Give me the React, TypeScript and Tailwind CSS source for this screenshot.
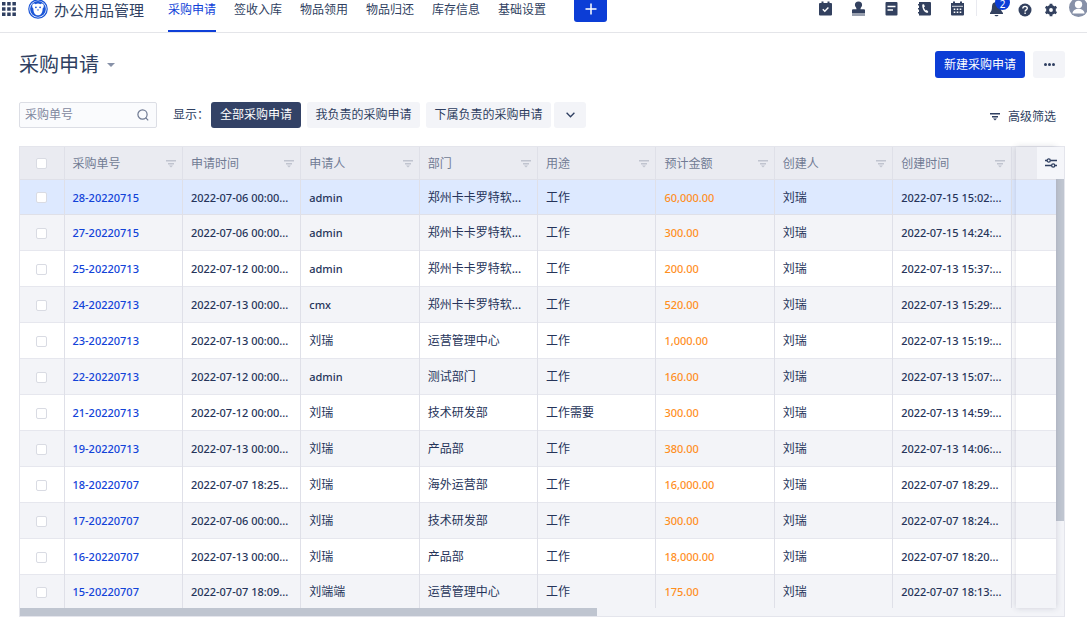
import React from 'react';

const NAV = ['采购申请', '签收入库', '物品领用', '物品归还', '库存信息', '基础设置'];
const HEADERS = ['采购单号', '申请时间', '申请人', '部门', '用途', '预计金额', '创建人', '创建时间'];
const ROWS: string[][] = [
  ['28-20220715', '2022-07-06 00:00...', 'admin', '郑州卡卡罗特软...', '工作', '60,000.00', '刘瑞', '2022-07-15 15:02:...'],
  ['27-20220715', '2022-07-06 00:00...', 'admin', '郑州卡卡罗特软...', '工作', '300.00', '刘瑞', '2022-07-15 14:24:...'],
  ['25-20220713', '2022-07-12 00:00...', 'admin', '郑州卡卡罗特软...', '工作', '200.00', '刘瑞', '2022-07-13 15:37:...'],
  ['24-20220713', '2022-07-13 00:00...', 'cmx', '郑州卡卡罗特软...', '工作', '520.00', '刘瑞', '2022-07-13 15:29:...'],
  ['23-20220713', '2022-07-13 00:00...', '刘瑞', '运营管理中心', '工作', '1,000.00', '刘瑞', '2022-07-13 15:19:...'],
  ['22-20220713', '2022-07-12 00:00...', 'admin', '测试部门', '工作', '160.00', '刘瑞', '2022-07-13 15:07:...'],
  ['21-20220713', '2022-07-12 00:00...', '刘瑞', '技术研发部', '工作需要', '300.00', '刘瑞', '2022-07-13 14:59:...'],
  ['19-20220713', '2022-07-13 00:00...', '刘瑞', '产品部', '工作', '380.00', '刘瑞', '2022-07-13 14:06:...'],
  ['18-20220707', '2022-07-07 18:25...', '刘瑞', '海外运营部', '工作', '16,000.00', '刘瑞', '2022-07-07 18:29...'],
  ['17-20220707', '2022-07-06 00:00...', '刘瑞', '技术研发部', '工作', '300.00', '刘瑞', '2022-07-07 18:24...'],
  ['16-20220707', '2022-07-13 00:00...', '刘瑞', '产品部', '工作', '18,000.00', '刘瑞', '2022-07-07 18:20...'],
  ['15-20220707', '2022-07-07 18:09...', '刘端端', '运营管理中心', '工作', '175.00', '刘瑞', '2022-07-07 18:13:...'],
];

function FilterIcon({ className }: { className: string }) {
  return (
    <svg viewBox="0 0 10 8" className={className} fill="currentColor" aria-hidden="true">
      <path d="M0 0h10v1.4H0zM2 3h6v1.4H2zM3 5.4h4L5 7.6z" />
    </svg>
  );
}

function Logo() {
  return (
    <svg viewBox="0 0 20 20" className="h-5 w-5" aria-hidden="true">
      <circle cx="10" cy="9" r="9.2" fill="#fff" stroke="#1b56d8" strokeWidth="1.2" />
      <circle cx="10" cy="9" r="7.9" fill="#1b56d8" />
      <path d="M4.200 6.200C4 3.600 6.400 3 7.600 4.200 9 3.400 11 3.400 12.400 4.200 13.600 3 16 3.600 15.800 6.200c-.1 1.300-.7 1.900-1.200 2.200.2 3.600-1.500 6.900-4.600 6.900s-4.800-3.300-4.600-6.900c-.5-.3-1.100-.9-1.200-2.200z" fill="#fff" />
      <circle cx="7.900" cy="7.300" r="0.900" fill="#1b56d8" />
      <circle cx="12.100" cy="7.300" r="0.900" fill="#1b56d8" />
      <path d="M9 9.500h2l-1 1.500z" fill="#1b56d8" />
    </svg>
  );
}

const TOOLS: { label: string; art: React.ReactNode }[] = [
  {
    label: '任务',
    art: (
      <>
        <path fill="currentColor" d="M2 2h1.500V.5h2V2h4V.5h2V2H13a1 1 0 0 1 1 1v10.500a1 1 0 0 1-1 1H2a1 1 0 0 1-1-1V3a1 1 0 0 1 1-1z" />
        <path d="M4.800 8.200l2 2 3.600-3.800" fill="none" stroke="#fff" strokeWidth="1.400" />
      </>
    ),
  },
  {
    label: '审批',
    art: (
      <>
        <path fill="currentColor" d="M7.500.5a3.600 3.600 0 0 1 3.600 3.600c0 1.700-1.600 2.500-1.600 4.200h3.500a1 1 0 0 1 1 1V12.500H1V9.300a1 1 0 0 1 1-1h3.500c0-1.700-1.600-2.500-1.600-4.200A3.600 3.600 0 0 1 7.500.5z" />
        <path fill="currentColor" opacity=".5" d="M1 13h13v2H1z" />
      </>
    ),
  },
  {
    label: '日志',
    art: (
      <>
        <rect x="1.500" y="1" width="12" height="13.500" rx="1" fill="currentColor" />
        <path d="M3.500 5.500h8M3.500 9h5.500" stroke="#fff" strokeWidth="1.500" fill="none" />
      </>
    ),
  },
  {
    label: '通讯录',
    art: (
      <>
        <path fill="currentColor" d="M2 1h11a1 1 0 0 1 1 1v11.500a1 1 0 0 1-1 1H2v-2H1v-1.500h1V8.500H1V7h1V4.500H1V3h1z" />
        <path fill="#fff" d="M5.300 3.600l1.700-.4.900 2.400-1 .9c.3 1.200.9 2.100 1.800 2.900l1.200-.5 1.500 2-1.200 1.200c-3.100-.6-5.400-4.900-4.900-8.500z" />
      </>
    ),
  },
  {
    label: '日程',
    art: (
      <>
        <path fill="currentColor" d="M1 2h2V.5h2V2h5V.5h2V2h2v11.500a1 1 0 0 1-1 1H2a1 1 0 0 1-1-1z" />
        <path stroke="#fff" strokeWidth="1.400" strokeDasharray="1.600 1.400" fill="none" d="M3.700 8.300h8M3.700 11.300h8" />
        <path stroke="#fff" strokeWidth=".8" d="M2 5.300h11" />
      </>
    ),
  },
];

export default function App() {
  return (
    <div className="min-h-screen bg-white font-['Noto_Sans','Noto_Sans_CJK_SC',sans-serif] text-xs text-[#2f3f61]">
      <header className="flex h-[33px] items-start border-b border-[#e4e5e9] bg-white">
        <button aria-label="应用" className="mt-0.5 ml-0.5 w-3.5">
          <svg viewBox="0 0 14 14" className="h-3.5 w-3.5" fill="currentColor">
            <path d="M0 0h3.500v3.500H0zM5.200 0h3.500v3.500H5.200zM10.400 0h3.500v3.500h-3.500zM0 5.200h3.500v3.500H0zM5.200 5.200h3.500v3.500H5.200zM10.400 5.200h3.500v3.500h-3.500zM0 10.400h3.500v3.500H0zM5.200 10.400h3.500v3.500H5.200zM10.400 10.400h3.500v3.500h-3.500z" />
          </svg>
        </button>
        <a href="#" className="ml-3 flex items-center gap-1.5">
          <Logo />
          <span className="text-[15px] leading-5">办公用品管理</span>
        </a>
        <nav className="ml-6 flex gap-[18px]">
          {NAV.map((n, i) => (
            <a
              key={n}
              href="#"
              className={i === 0 ? 'h-8 border-b-2 border-[#0e3fd8] leading-5 text-[#0e3fd8]' : 'h-8 leading-5'}
            >
              {n}
            </a>
          ))}
        </nav>
        <button aria-label="新建" className="ml-7 flex h-[22px] w-[33px] items-center justify-center rounded-b-[3px] bg-[#0c3dd6] text-white">
          <svg viewBox="0 0 12 12" className="mb-1 h-3 w-3" stroke="currentColor" strokeWidth="1.500">
            <path d="M6 .5v11M.5 6h11" />
          </svg>
        </button>
        <div className="ml-auto flex gap-[18px] text-[#33415f]">
          {TOOLS.map((t) => (
            <button key={t.label} aria-label={t.label} className="mt-px w-[15px]">
              <svg viewBox="0 0 15 15" className="h-[15px] w-[15px]">{t.art}</svg>
            </button>
          ))}
        </div>
        <span className="ml-[11px] h-4 w-px bg-[#e9eaf0]" />
        <div className="ml-3 flex text-[#33415f]">
          <button aria-label="通知" className="relative mt-px w-[15px]">
            <svg viewBox="0 0 15 15" className="h-[15px] w-[15px]" fill="currentColor">
              <path d="M7 0a4.500 4.500 0 0 1 4.500 4.500c0 3.500 1.200 4.800 2.500 6.500v1H1v-1c1.300-1.700 2-3 2-6.500A4.500 4.500 0 0 1 7 0zM5.500 13h4c-.5 1.700-3.500 1.700-4 0z" />
            </svg>
            <span className="absolute -top-1.5 left-[6px] flex h-[15px] w-[15px] items-end justify-center rounded-full bg-[#0c3dd6] text-[10px] leading-[11px] text-white">2</span>
          </button>
          <button aria-label="帮助" className="mt-0.5 ml-3.5">
            <svg viewBox="0 0 14 14" className="h-3.5 w-3.5">
              <circle cx="7" cy="7" r="6.500" fill="currentColor" />
              <path d="M4.800 5.600c0-3 4.500-2.800 4.500-.3 0 1.500-2.200 1.600-2.200 3.200M7.100 9.600v1.500" fill="none" stroke="#fff" strokeWidth="1.400" />
            </svg>
          </button>
          <button aria-label="设置" className="mt-0.5 ml-3">
            <svg viewBox="0 0 14 14" className="h-3.5 w-3.5">
              <circle cx="7" cy="7" r="3.400" fill="none" stroke="currentColor" strokeWidth="3" />
              <path d="M7 .8v2M7 11.200v2M1.600 3.900l1.800 1M10.600 9.100l1.800 1M1.600 10.100l1.800-1M10.600 4.900l1.800-1" stroke="currentColor" strokeWidth="2.800" />
            </svg>
          </button>
          <button aria-label="用户" className="ml-[11px] w-[18px] overflow-hidden">
            <svg viewBox="0 0 18 18" className="h-[18px] w-[18px]">
              <circle cx="9.500" cy="7.500" r="9.500" fill="#8791a8" />
              <circle cx="9.500" cy="4.500" r="3.700" fill="#fff" />
              <path d="M3.500 13.500c0-6.500 12-6.500 12 0z" fill="#fff" />
            </svg>
          </button>
        </div>
      </header>

      <main className="pr-[22px] pl-[19px]">
        <div className="flex items-start justify-between pt-[18px]">
          <h1>
            <button className="flex items-center gap-2 text-xl leading-7">
              采购申请
              <svg viewBox="0 0 8 4" className="h-1 w-2 text-[#8791a8]" fill="currentColor">
                <path d="M0 0h8L4 4z" />
              </svg>
            </button>
          </h1>
          <div className="flex gap-2">
            <button className="h-[27px] rounded-[3px] bg-[#0c3dd6] px-[9px] text-white">新建采购申请</button>
            <button aria-label="更多" className="flex h-[27px] w-8 items-center justify-center rounded-[3px] bg-[#f3f4f8]">
              <svg viewBox="0 0 11 3" className="h-[3px] w-[11px]" fill="currentColor">
                <circle cx="1.500" cy="1.500" r="1.500" />
                <circle cx="5.500" cy="1.500" r="1.500" />
                <circle cx="9.500" cy="1.500" r="1.500" />
              </svg>
            </button>
          </div>
        </div>

        <div className="mt-[23px] flex items-center">
          <div className="flex h-[26px] w-[138px] items-center rounded-[2px] border border-[#dcdee5] bg-[#fafbfd] px-[5px]">
            <input aria-label="采购单号" placeholder="采购单号" className="min-w-0 flex-1 bg-transparent outline-none placeholder:text-[#7f889e]" />
            <svg viewBox="0 0 12 12" className="mr-0.5 h-3 w-3 text-[#6d7891]" fill="none" stroke="currentColor" strokeWidth="1.200">
              <circle cx="5.500" cy="5.500" r="4.600" />
              <path d="M8.600 8.600l2.600 2.800" />
            </svg>
          </div>
          <span className="ml-4 w-[38px] whitespace-nowrap">显示：</span>
          <button className="h-[26px] w-[90px] rounded-[3px] bg-[#334266] text-white">全部采购申请</button>
          <button className="ml-1.5 h-[26px] w-[113px] rounded-[3px] bg-[#f3f4f8]">我负责的采购申请</button>
          <button className="ml-1.5 h-[26px] w-[125px] rounded-[3px] bg-[#f3f4f8]">下属负责的采购申请</button>
          <button aria-label="展开" className="ml-[3px] flex h-[26px] w-8 items-center justify-center rounded-[3px] bg-[#f3f4f8]">
            <svg viewBox="0 0 9 6" className="h-1.5 w-[9px]" fill="none" stroke="currentColor" strokeWidth="1.300">
              <path d="M.6.7l3.900 4L8.400.7" />
            </svg>
          </button>
          <button className="mr-[9px] ml-auto flex items-center gap-2 pt-1">
            <FilterIcon className="h-2 w-2.5" />
            高级筛选
          </button>
        </div>

        <div className="relative mt-[18px] border border-[#e4e5ec] bg-[#f3f4f8]">
          <div className="flex">
            <div className="min-w-0 flex-1">
              <table className="w-full table-fixed border-collapse text-left">
                <colgroup>
                  <col className="w-11" />
                  {HEADERS.map((h) => (
                    <col key={h} />
                  ))}
                  <col className="w-[45px]" />
                </colgroup>
                <thead>
                  <tr className="h-8 border-b border-[#dfe0e8] bg-[#eaebf1] text-[#717b94]">
                    <th className="border-r border-[#dfe0e8] px-0 pt-0.5 pb-0">
                      <input type="checkbox" aria-label="全选" className="mx-auto block h-[11px] w-[11px] appearance-none rounded-[2px] border border-[#d9dbe3] bg-white" />
                    </th>
                    {HEADERS.map((h) => (
                      <th key={h} className="border-r border-[#dfe0e8] pt-0.5 pr-[6px] pb-0 pl-2 font-normal">
                        <div className="flex items-center justify-between">
                          {h}
                          <FilterIcon className="h-2 w-2.5 text-[#c0c4cf]" />
                        </div>
                      </th>
                    ))}
                    <th />
                  </tr>
                </thead>
                <tbody>
                  {ROWS.map((row, r) => (
                    <tr
                      key={row[0]}
                      className={
                        r === 0
                          ? 'h-[35px] border-b border-[#dfe0e8] bg-[#dde9ff]'
                          : r % 2
                            ? 'h-9 border-b border-[#e6e7ee] bg-[#f3f4f8] last:h-[34px] last:border-b-0'
                            : 'h-9 border-b border-[#e6e7ee] bg-white'
                      }
                    >
                      <td className="border-r border-[#dfe0e8] px-0 pt-0.5 pb-0">
                        <input type="checkbox" aria-label={row[0]} className="mx-auto block h-[11px] w-[11px] appearance-none rounded-[2px] border border-[#d9dbe3] bg-white" />
                      </td>
                      {row.map((cell, c) => (
                        <td key={c} className="border-r border-[#dfe0e8] px-2 pt-0.5 pb-0 whitespace-nowrap text-[#26345a]">
                          {c === 0 ? (
                            <a href="#" className="text-[11px] font-medium text-[#1243d8]">{cell}</a>
                          ) : c === 5 ? (
                            <span className="text-[11px] font-medium text-[#ff8f1f]">{cell}</span>
                          ) : /^[\x20-\x7e]+$/.test(cell) ? (
                            <span className="text-[11px] font-medium">{cell}</span>
                          ) : (
                            cell
                          )}
                        </td>
                      ))}
                      <td />
                    </tr>
                  ))}
                </tbody>
              </table>
            </div>
            <div className="w-2 shrink-0 pt-8">
              <div className="h-[342px] bg-[#bfc5d0]" />
            </div>
          </div>
          <div className="h-2">
            <div className="h-2 w-[55.3%] bg-[#bfc5d0]" />
          </div>
          <div className="pointer-events-none absolute top-0 right-2 bottom-2 w-10 shadow-[0_0_6px_rgba(40,50,80,0.18)]" />
          <button aria-label="列设置" className="absolute top-0 right-0 flex h-8 w-[27px] items-center justify-center bg-[#f5f6fa]">
            <svg viewBox="0 0 12 10" className="h-2.5 w-3" fill="none" stroke="currentColor" strokeWidth="1.300">
              <path d="M0 2.500h2M5.500 2.500H12M0 7.500h6.500M10 7.500h2" />
              <circle cx="3.700" cy="2.500" r="1.600" />
              <circle cx="8.200" cy="7.500" r="1.600" />
            </svg>
          </button>
        </div>
      </main>
    </div>
  );
}
